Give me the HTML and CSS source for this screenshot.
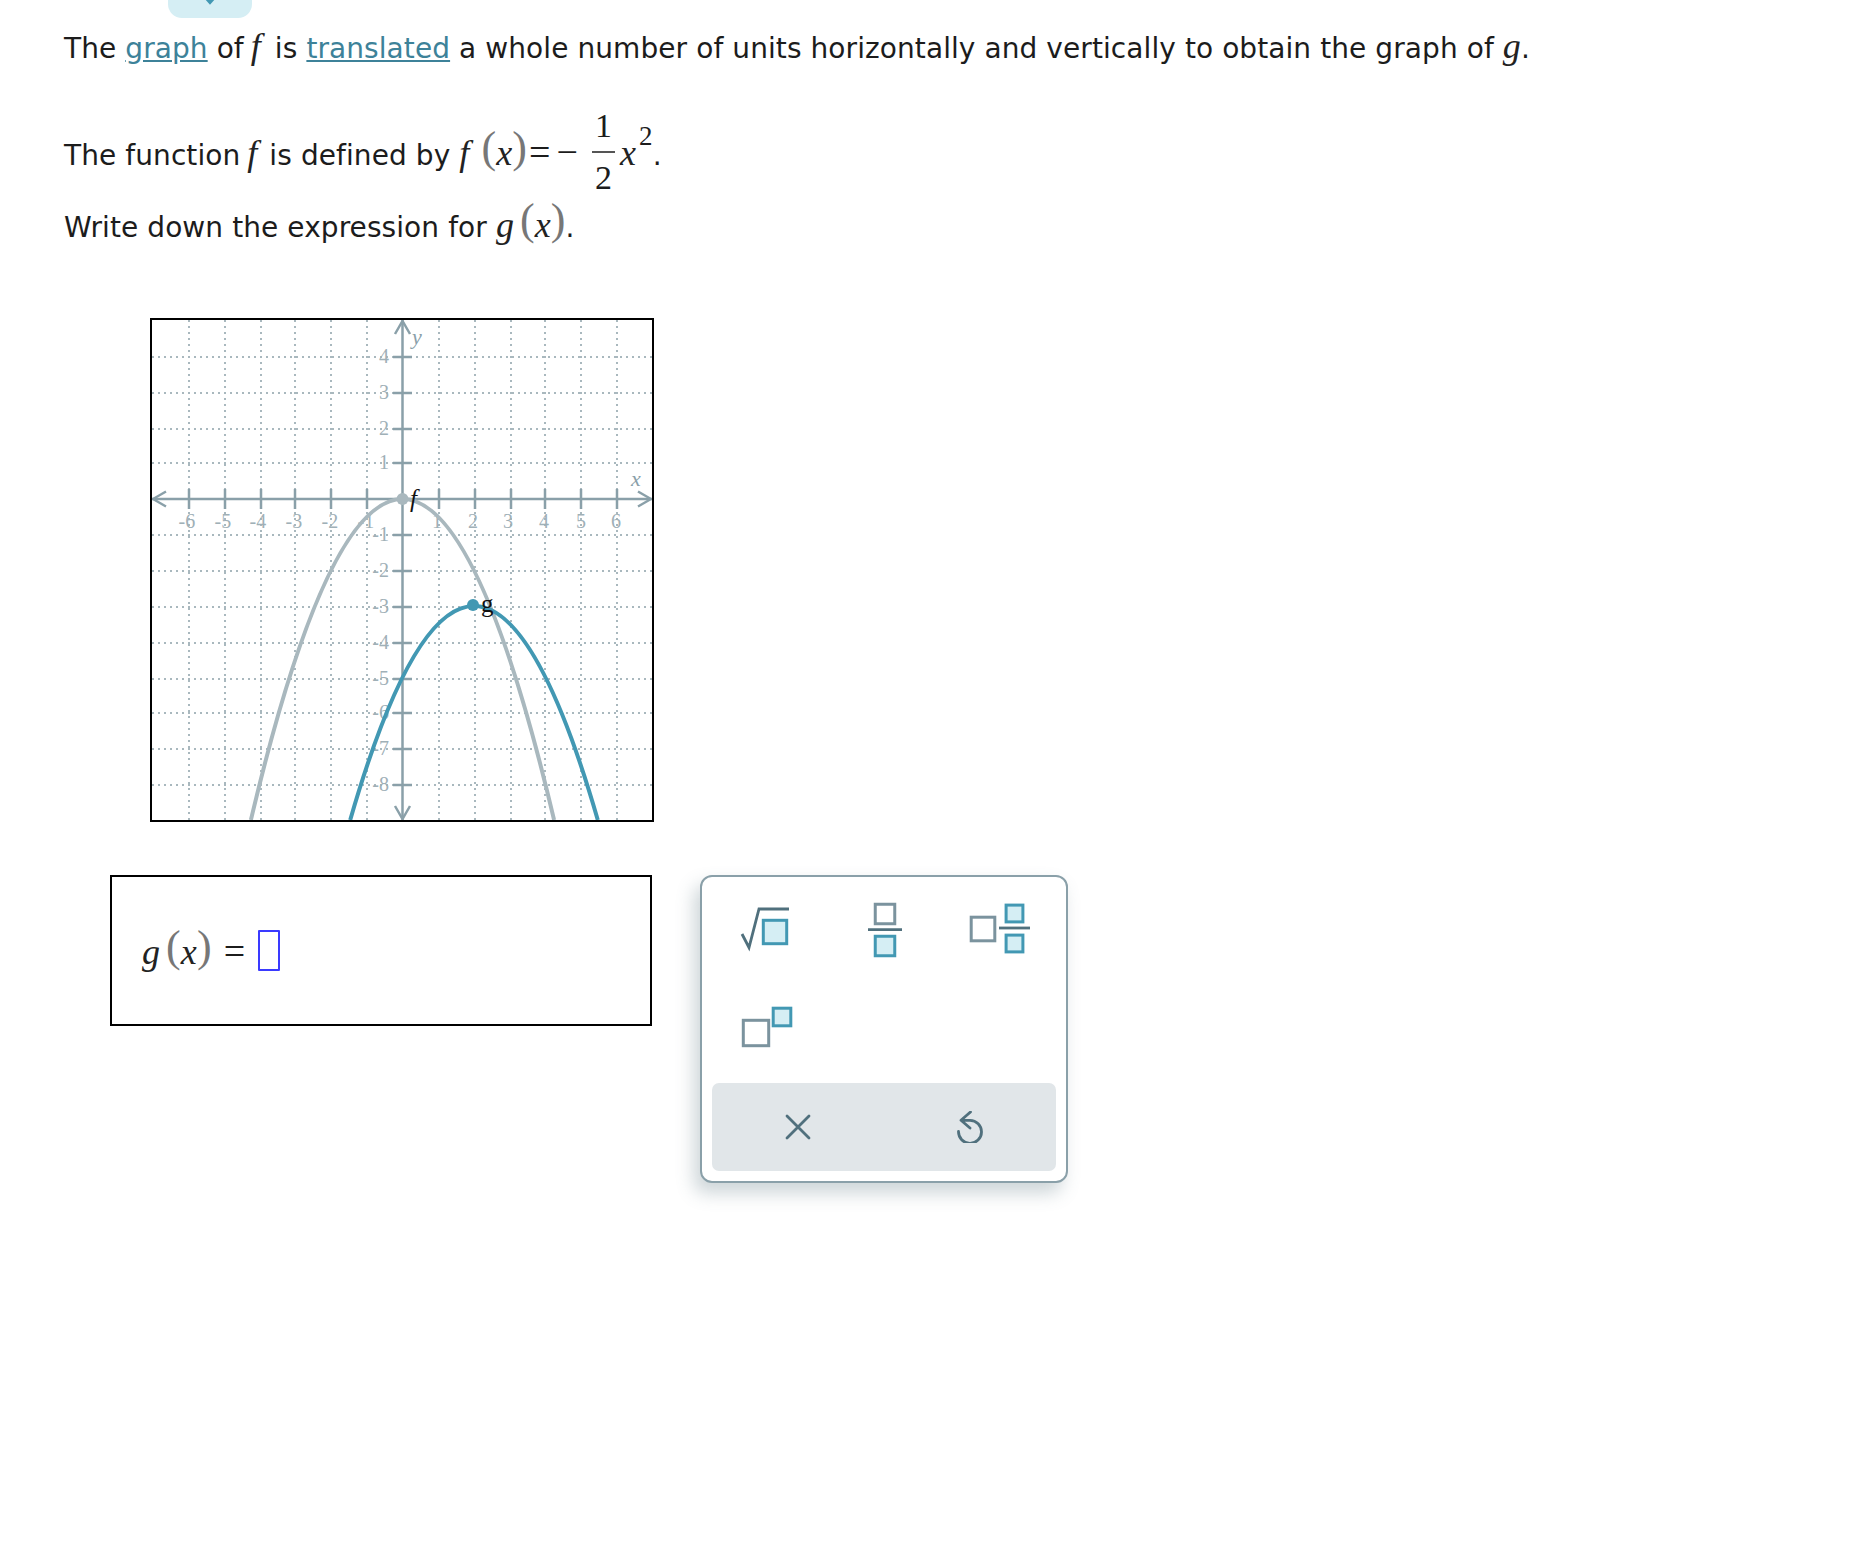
FILE: index.html

```html
<!DOCTYPE html>
<html lang="en">
<head>
  <meta charset="UTF-8" />
  <title>Translated graph question</title>
  <link rel="stylesheet" href="styles.css">
</head>
<body>

  <div class="top-tab">
    <svg width="84" height="18" viewBox="0 0 84 18"><path class="tab-mark" d="M38 -2L42 2.5L46 -2" /></svg>
  </div>

  <div class="question">
    <p class="line line-one">The <a href="#">graph</a> of <i class="mvar fn">f</i> is <a href="#">translated</a> a whole number of units horizontally and vertically to obtain the graph of <i class="mvar">g</i>.</p>

    <p class="line line-two">The function <i class="mvar fn">f</i> is defined by <i class="mvar">f</i><span class="paren open-f">(</span><i class="mvar">x</i><span class="paren">)</span><span class="op">=</span><span class="op minus">−</span><span class="frac"><span class="num">1</span><span class="den">2</span></span><i class="mvar">x</i><sup class="exp">2</sup>.</p>

    <p class="line line-three">Write down the expression for <i class="mvar">g</i><span class="paren open-g">(</span><i class="mvar">x</i><span class="paren">)</span>.</p>
  </div>

  <div class="graph">
    <svg width="500" height="500" viewBox="0 0 500 500">
      <!-- grid -->
      <path class="grid" d="M37 0V500M73 0V500M109 0V500M143 0V500M179 0V500M215 0V500M287 0V500M323 0V500M359 0V500M393 0V500M429 0V500M465 0V500" />
      <path class="grid" d="M0 37H500M0 73H500M0 109H500M0 143H500M0 215H500M0 251H500M0 287H500M0 323H500M0 359H500M0 393H500M0 429H500M0 465H500" />

      <!-- axes and ticks -->
      <path class="axis" d="M0 179H500M250.5 0V500" />
      <path class="axis" d="M14 171.5L1 179L14 186.5M486 171.5L499 179L486 186.5M243 14L250.5 1L258 14M243 486L250.5 499L258 486" />
      <path class="axis" d="M37 169V189M73 169V189M109 169V189M143 169V189M179 169V189M215 169V189M287 169V189M323 169V189M359 169V189M393 169V189M429 169V189M465 169V189" />
      <path class="axis" d="M241 37H260M241 73H260M241 109H260M241 143H260M241 215H260M241 251H260M241 287H260M241 323H260M241 359H260M241 393H260M241 429H260M241 465H260" />

      <!-- tick labels -->
      <g class="labels">
        <text x="35" y="208">-6</text>
        <text x="71" y="208">-5</text>
        <text x="106" y="208">-4</text>
        <text x="142" y="208">-3</text>
        <text x="178" y="208">-2</text>
        <text x="214" y="208">-1</text>
        <text x="285" y="208">1</text>
        <text x="321" y="208">2</text>
        <text x="356" y="208">3</text>
        <text x="392" y="208">4</text>
        <text x="429" y="208">5</text>
        <text x="464" y="208">6</text>
      </g>
      <g class="labels labels-y">
        <text x="237" y="43">4</text>
        <text x="237" y="79">3</text>
        <text x="237" y="115">2</text>
        <text x="237" y="149">1</text>
        <text x="237" y="221">-1</text>
        <text x="237" y="257">-2</text>
        <text x="237" y="293">-3</text>
        <text x="237" y="329">-4</text>
        <text x="237" y="365">-5</text>
        <text x="237" y="399">-6</text>
        <text x="237" y="435">-7</text>
        <text x="237" y="471">-8</text>
      </g>
      <text class="axis-name" x="484" y="166">x</text>
      <text class="axis-name" x="265" y="24">y</text>

      <!-- curves -->
      <path class="curve-f" d="M98.9 500Q250.5 -142 402.1 500" />
      <path class="curve-g" d="M198.2 500Q322 72 445.8 500" />
      <circle class="dot-f" cx="250.5" cy="179" r="6" />
      <circle class="dot-g" cx="321" cy="285" r="6" />
      <text class="curve-name" x="258" y="187">f</text>
      <text class="curve-name curve-name-g" x="329" y="292">g</text>
    </svg>
  </div>

  <div class="answer-row">
    <div class="answer">
      <span class="answer-math"><i class="mvar">g</i><span class="paren open-g">(</span><i class="mvar">x</i><span class="paren">)</span><span class="op op-answer">=</span></span>
      <span class="slot"></span>
    </div>

    <div class="palette">
      <div class="keys">
        <button class="key" aria-label="square root">
          <svg width="70" height="60" viewBox="0 0 70 60">
            <path class="ink" d="M8 35L15 48.5L25 10H55" />
            <rect class="filled" x="29.3" y="21.3" width="23.4" height="23.4" />
          </svg>
        </button>
        <button class="key" aria-label="fraction">
          <svg width="70" height="60" viewBox="0 0 70 60">
            <rect class="empty" x="26.25" y="5.25" width="19.5" height="19.5" />
            <path class="ink" d="M19 30.7H53" />
            <rect class="filled" x="26.25" y="37.25" width="19.5" height="19.5" />
          </svg>
        </button>
        <button class="key" aria-label="mixed number">
          <svg width="70" height="60" viewBox="0 0 70 60">
            <rect class="empty" x="7.2" y="18.2" width="23.6" height="23.6" />
            <rect class="filled" x="42.1" y="6.1" width="16.8" height="16.8" />
            <path class="ink" d="M35 29H66" />
            <rect class="filled" x="42.1" y="36.1" width="16.8" height="16.8" />
          </svg>
        </button>
        <button class="key" aria-label="exponent">
          <svg width="70" height="60" viewBox="0 0 70 60">
            <rect class="empty" x="9.3" y="23.3" width="25.4" height="25.4" />
            <rect class="filled" x="39.2" y="11.2" width="17.6" height="17.6" />
          </svg>
        </button>
      </div>

      <div class="actions">
        <button class="action" aria-label="clear">
          <svg width="32" height="32" viewBox="0 0 32 32">
            <path class="ink round" d="M5 5L27 27M27 5L5 27" />
          </svg>
        </button>
        <button class="action" aria-label="undo">
          <svg width="32" height="32" viewBox="0 0 32 32">
            <path class="ink round" d="M7 9.3H16A11.5 11.5 0 1 1 4.5 20.5M16.5 1L7 9.3L16 17" />
          </svg>
        </button>
      </div>
    </div>
  </div>

</body>
</html>
```

FILE: styles.css

```css
html, body {
  min-height: 100%;
}
body {
  margin: 0;
  min-height: 1566px;
  background: #fff;
  color: #1c1c1c;
  font-family: "DejaVu Sans", Verdana, sans-serif;
  font-size: 28px;
  letter-spacing: 0.08px;
}

.top-tab {
  width: 84px;
  height: 18px;
  margin-left: 168px;
  background: #d5eef4;
  border-radius: 0 0 14px 14px;
}
.top-tab svg {
  display: block;
}
.tab-mark {
  fill: none;
  stroke: #4298b3;
  stroke-width: 3;
}

.question {
  padding-left: 64px;
}

.line {
  margin: 0;
  white-space: nowrap;
  line-height: 36px;
}
.line-one {
  margin-top: 10px;
}
.line-two {
  margin-top: 42px;
}
.line-three {
  margin-top: 7px;
}

a {
  color: #3d8299;
  text-decoration: underline;
}

.mvar {
  font-family: "Liberation Serif", "Times New Roman", serif;
  font-size: 36px;
  font-style: italic;
  color: #222;
}
.fn {
  margin: 0 3px 0 -2px;
}
.line-one .fn {
  margin-right: 5px;
}

.paren {
  font-family: "Liberation Serif", "Times New Roman", serif;
  font-size: 44px;
  color: #777;
  vertical-align: 3px;
}
.open-f {
  margin-left: 12px;
}
.open-g {
  margin-left: 6px;
}

.op {
  font-family: "Liberation Serif", "Times New Roman", serif;
  font-size: 38px;
  margin-left: 2px;
}
.minus {
  margin-left: 6px;
  margin-right: 14px;
}

.frac {
  display: inline-block;
  margin-right: 5px;
  font-family: "Liberation Serif", "Times New Roman", serif;
  font-size: 34px;
  line-height: 34px;
  text-align: center;
  vertical-align: -24px;
}
.num {
  display: block;
  padding: 0 3px 8px;
  border-bottom: 2px solid #555;
}
.den {
  display: block;
  padding-top: 8px;
}
.exp {
  font-family: "Liberation Serif", "Times New Roman", serif;
  font-size: 27px;
  line-height: 1;
  margin-left: 3px;
  vertical-align: 20px;
}

.graph {
  width: 500px;
  height: 500px;
  margin: 72px 0 0 150px;
  border: 2px solid #000;
}
.graph svg {
  display: block;
}

.grid {
  fill: none;
  stroke: #a9b8be;
  stroke-width: 2;
  stroke-dasharray: 2 4;
}
.axis {
  fill: none;
  stroke: #8aa0a9;
  stroke-width: 2.5;
}
.labels text {
  font-family: "Liberation Serif", serif;
  font-size: 20px;
  fill: #9fb0b7;
  text-anchor: middle;
}
.labels-y text {
  text-anchor: end;
}
.axis-name {
  font-family: "Liberation Serif", serif;
  font-size: 22px;
  font-style: italic;
  fill: #8aa0a9;
  text-anchor: middle;
}
.curve-name {
  font-family: "Liberation Serif", serif;
  font-size: 25px;
  font-style: italic;
  fill: #111;
}
.curve-name-g {
  font-style: normal;
}
.curve-f {
  fill: none;
  stroke: #a9b8be;
  stroke-width: 4;
}
.curve-g {
  fill: none;
  stroke: #4298b3;
  stroke-width: 4;
}
.dot-f {
  fill: #a9b8be;
}
.dot-g {
  fill: #4298b3;
}

.answer-row {
  display: flex;
  gap: 48px;
  margin: 53px 0 0 110px;
}
.answer {
  display: flex;
  align-items: center;
  box-sizing: border-box;
  width: 542px;
  height: 151px;
  padding-left: 30px;
  border: 2px solid #000;
}
.answer-math {
  white-space: nowrap;
  padding-bottom: 8px;
}
.op-answer {
  margin: 0 13px 0 12px;
}
.slot {
  box-sizing: border-box;
  width: 22px;
  height: 41px;
  border: 2px solid #3a3aff;
  border-radius: 1px;
}

.palette {
  box-sizing: border-box;
  width: 368px;
  height: 308px;
  padding: 3px 10px 10px;
  background: #fff;
  border: 2px solid #8aa0a9;
  border-radius: 12px;
  box-shadow: -6px 10px 18px rgba(90, 115, 125, 0.3);
}
.keys {
  display: grid;
  grid-template-columns: repeat(3, 1fr);
  grid-auto-rows: 98px;
  height: 203px;
}
.key, .action {
  display: flex;
  align-items: center;
  justify-content: center;
  padding: 0;
  border: 0;
  background: none;
}
.actions {
  display: flex;
  height: 88px;
  background: #e1e6e9;
  border-radius: 7px;
}
.action {
  flex: 1;
}

.ink {
  fill: none;
  stroke: #50707d;
  stroke-width: 2.8;
}
.round {
  stroke-linecap: round;
  stroke-linejoin: round;
}
.filled {
  fill: #d5eef4;
  stroke: #4298b3;
  stroke-width: 3;
}
.empty {
  fill: #fff;
  stroke: #7b939e;
  stroke-width: 3;
}
```
